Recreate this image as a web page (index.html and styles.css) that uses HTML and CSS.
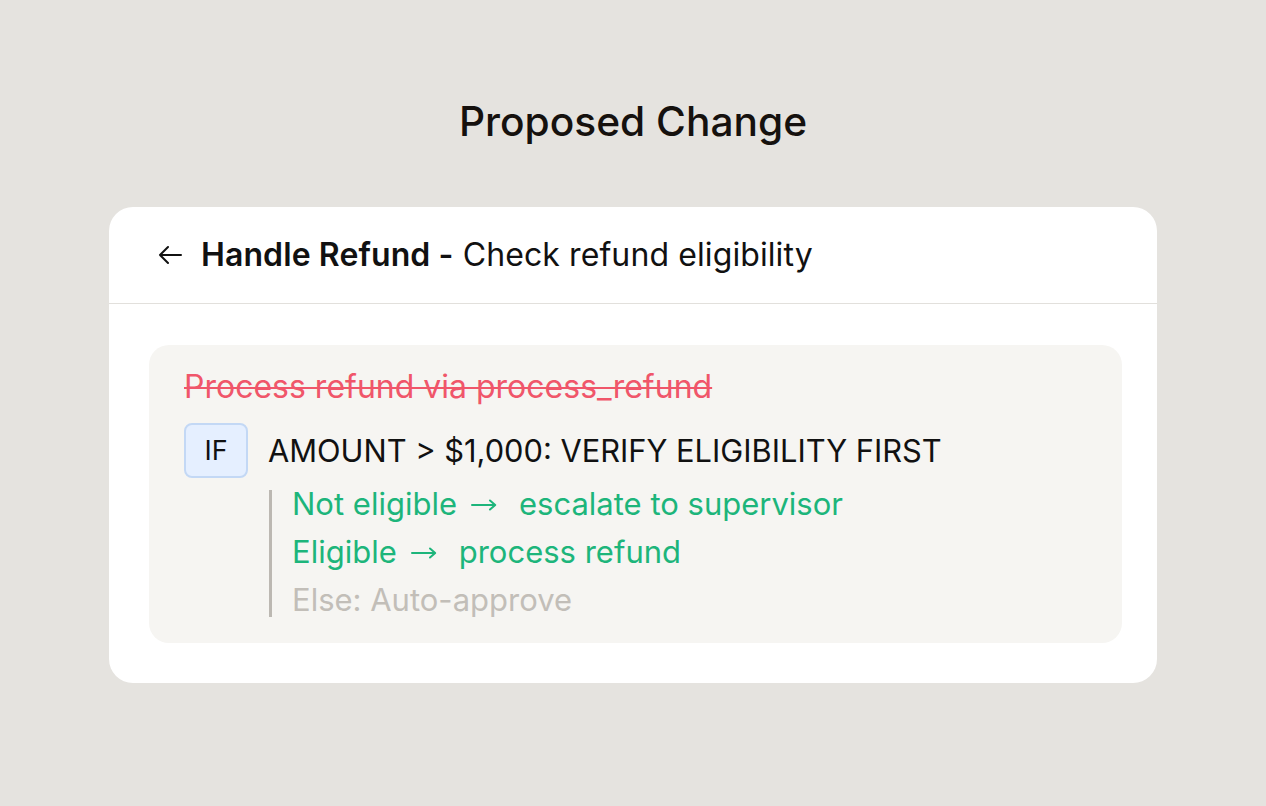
FILE: index.html
```html
<!DOCTYPE html>
<html>
<head>
<meta charset="utf-8">
<link rel="stylesheet" href="styles.css">
</head>
<body>
<main class="page">
  <h1 class="title">Proposed Change</h1>
  <section class="card">
    <header class="card-header">
      <svg class="back" width="26" height="22" viewBox="0 0 26 22" aria-hidden="true">
        <path d="M24 11H3M11 3L3 11L11 19" fill="none" stroke="#111" stroke-width="2" stroke-linecap="round" stroke-linejoin="round"/>
      </svg>
      <h2 class="step"><strong>Handle Refund -</strong> Check refund eligibility</h2>
    </header>
    <div class="card-body">
      <div class="diff">
        <p class="removed">Process refund via process_refund</p>
        <div class="cond">
          <span class="badge">IF</span>
          <span class="cond-text">AMOUNT &gt; $1,000: VERIFY ELIGIBILITY FIRST</span>
        </div>
        <div class="branches">
          <p class="added">Not eligible<svg class="arrow" width="26" height="12" viewBox="0 0 26 12" role="img" aria-label="→"><path d="M1 6H24M19 1.5L24.2 6L19 10.5" fill="none" stroke="currentColor" stroke-width="2" stroke-linecap="round" stroke-linejoin="round"/></svg>escalate to supervisor</p>
          <p class="added">Eligible<svg class="arrow" width="26" height="12" viewBox="0 0 26 12" role="img" aria-label="→"><path d="M1 6H24M19 1.5L24.2 6L19 10.5" fill="none" stroke="currentColor" stroke-width="2" stroke-linecap="round" stroke-linejoin="round"/></svg>process refund</p>
          <p class="else">Else: Auto-approve</p>
        </div>
      </div>
    </div>
  </section>
</main>
</body>
</html>
```
FILE: styles.css
```css
* { box-sizing: border-box; }
html, body { margin: 0; padding: 0; }
body {
  background: #e5e3df;
  font-family: Inter, "Noto Sans", sans-serif;
  color: #111;
  width: 1266px;
  height: 806px;
  overflow: hidden;
}
.page {
  display: flex;
  flex-direction: column;
  align-items: center;
  padding-top: 97px;
}
.title {
  margin: 0;
  font-size: 40.7px;
  font-weight: 500;
  line-height: 50px;
  color: #15110e;
}
.card {
  margin-top: 60px;
  width: 1048px;
  background: #fff;
  border-radius: 24px;
}
.card-header {
  height: 97px;
  border-bottom: 1px solid #e2e0dc;
  display: flex;
  align-items: center;
  padding-left: 48px;
  gap: 18px;
}
.back { display: block; }
.step {
  margin: 0;
  font-size: 32px;
  font-weight: 400;
  line-height: 40px;
  color: #111;
  letter-spacing: 0.1px;
}
.step strong { font-weight: 600; }
.card-body {
  padding: 41px 35px 40px 40px;
}
.diff {
  background: #f6f5f2;
  border-radius: 20px;
  padding: 22px 36px 26px 35px;
}
.removed {
  margin: 0;
  font-size: 32px;
  line-height: 40px;
  color: #f0566a;
  text-decoration: line-through;
  text-decoration-thickness: 2px;
}
.cond {
  margin-top: 16px;
  display: flex;
  align-items: center;
  gap: 20px;
}
.badge {
  width: 64px;
  height: 55px;
  display: flex;
  align-items: center;
  justify-content: center;
  background: #e5efff;
  border: 2px solid #c3d8f5;
  border-radius: 8px;
  font-size: 27px;
  color: #111;
}
.cond-text {
  font-size: 30.8px;
  color: #111;
}
.branches {
  margin: 12px 0 0 85px;
  border-left: 3px solid #bcb8b2;
  padding: 0 0 3px 20px;
  display: flex;
  flex-direction: column;
  gap: 20px;
}
.branches p {
  margin: 0;
  font-size: 31px;
  line-height: 28px;
  display: flex;
  align-items: center;
}
.arrow {
  margin: 2px 22px 0 14px;
  flex: none;
}
.added { color: #1db57b; }
.else { color: #c2beb8; }
```
